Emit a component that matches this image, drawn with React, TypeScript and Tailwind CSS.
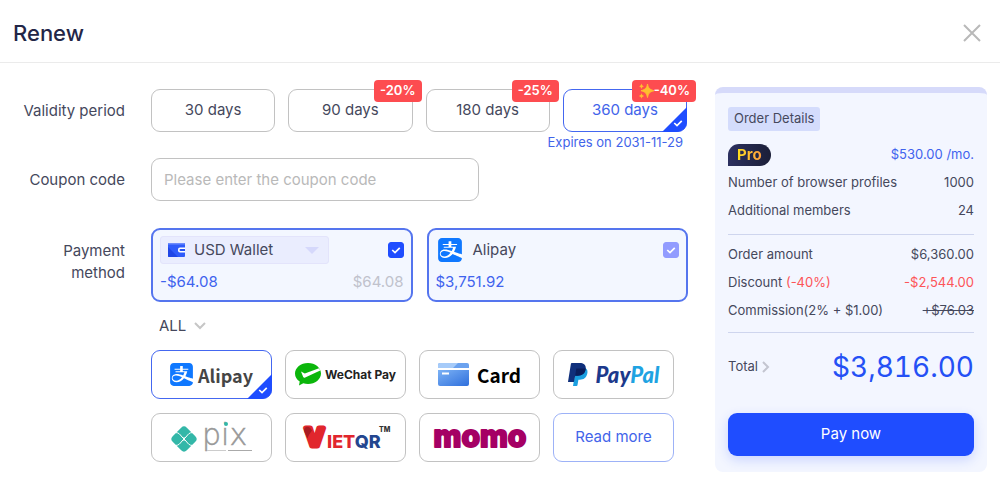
import { useState } from "react";
import type { ReactNode } from "react";
import { SiAlipay } from "react-icons/si";

const PERIODS = [
  { days: 30 },
  { days: 90, off: "-20%" },
  { days: 180, off: "-25%" },
  { days: 360, off: "-40%", hot: true },
];

function Tick({ className = "" }: { className?: string }) {
  return (
    <svg viewBox="0 0 12 12" fill="none" stroke="currentColor" strokeWidth="2" className={className} aria-hidden="true">
      <path d="M1.5 6 4.8 9.2 10.5 3.4" />
    </svg>
  );
}

// Blue triangle with a tick in the corner of a selected option
function Corner() {
  return (
    <span className="absolute -right-px -bottom-px flex size-[25px] items-end justify-end rounded-br-[10px] bg-[#1f4dff] p-1 text-white [clip-path:polygon(100%_0,100%_100%,0_100%)]">
      <Tick className="size-[10px]" />
    </span>
  );
}

function Sparkles() {
  return (
    <svg viewBox="0 0 16 16" fill="#ffbe2e" className="size-4" aria-hidden="true">
      <path d="M9.500 1c.8 4.200 2 5.400 6.500 6.700-4.500 1.300-5.700 2.500-6.500 6.800C8.700 10.200 7.500 9 3 7.700 7.500 6.400 8.700 5.200 9.500 1Z" stroke="#ffbe2e" strokeLinejoin="round" />
      <path d="M3.500.5c.4 1.700 1 2.300 2.500 2.800-1.500.5-2.100 1.100-2.500 2.900C3.100 4.400 2.500 3.800 1 3.300 2.500 2.800 3.100 2.200 3.500.5ZM3.500 10c.4 1.800 1 2.400 2.700 2.900-1.700.5-2.300 1.100-2.700 2.900-.4-1.800-1-2.400-2.700-2.900 1.700-.5 2.300-1.100 2.700-2.900Z" />
    </svg>
  );
}

function AlipayMark({ className }: { className: string }) {
  return (
    <span className={`inline-flex rounded-[4px] bg-white text-[#0f78ff] ${className}`}>
      <SiAlipay className="size-full" />
    </span>
  );
}

function WalletIcon() {
  return (
    <svg viewBox="0 0 17 14" className="h-[14px] w-[17px]" aria-hidden="true">
      <path d="M1 0h15a1 1 0 0 1 1 1v12a1 1 0 0 1-1 1H1a1 1 0 0 1-1-1V1a1 1 0 0 1 1-1Z" fill="#2f5bfa" />
      <path d="M0 4l10 10H1a1 1 0 0 1-1-1Z" fill="#1f45e6" />
      <path d="M0 1a1 1 0 0 1 1-1h15a1 1 0 0 1 1 1v.5H0Z" fill="#6f8cfc" />
      <path d="M17 4.500h-5a2 2 0 0 0-2 2v1a2 2 0 0 0 2 2h5Z" fill="#fff" />
      <path d="M17 6h-4.500a1 1 0 0 0 0 2H17Z" fill="#2450f5" />
    </svg>
  );
}

function WeChatPayMark() {
  return (
    <svg viewBox="0 0 26 23" className="h-[23px] w-[26px]" aria-hidden="true">
      <path d="M13 0C5.800 0 0 4.700 0 10.500c0 3.300 1.800 6.200 4.700 8.100L4 22.500l4.300-2.300c1.500.5 3.100.8 4.700.8 7.200 0 13-4.700 13-10.500S20.200 0 13 0Z" fill="#0bb60b" />
      <path d="M6 8.500c1.400.4 2.600 1.400 3.800 2L24 5.300c.5.700.9 1.400 1.200 2.200L10.200 14.600c-.8.400-1.600.2-2-.5Z" fill="#fff" />
    </svg>
  );
}

function CardMark() {
  return (
    <svg viewBox="0 0 31 23" className="h-[23px] w-[31px]" aria-hidden="true">
      <defs>
        <linearGradient id="card-face" x1="0" y1="0" x2="1" y2="1">
          <stop offset="0" stopColor="#7cb2f5" />
          <stop offset="1" stopColor="#2f6fdc" />
        </linearGradient>
      </defs>
      <path d="M2 0h27a2 2 0 0 1 2 2v3H0V2a2 2 0 0 1 2-2Z" fill="#6ba2ef" />
      <path d="M2 0h18l-5 5H0V2a2 2 0 0 1 2-2Z" fill="#a6cbf9" />
      <path d="M0 7h31v14a2 2 0 0 1-2 2H2a2 2 0 0 1-2-2Z" fill="url(#card-face)" />
      <path d="M4 10.500h7" stroke="#fff" strokeWidth="2" />
    </svg>
  );
}

function PayPalMark() {
  return (
    <svg viewBox="0 0 20 23" className="h-[23px] w-[20px]" aria-hidden="true">
      <path d="M8 5h9.500c2 1.300 2.400 3.500 1.700 6-1 3.900-3.600 5.700-7.400 5.700h-1.400L9.500 22a1 1 0 0 1-1 .9H5Z" fill="#1a9fe0" />
      <path d="M3.800 0h8c4 0 6.500 2 5.900 6-.7 4.600-3.700 6.700-8 6.700H7.200L5.900 19H.6a.5.500 0 0 1-.5-.7L2.900.8A1 1 0 0 1 3.800 0Z" fill="#10307c" />
      <path d="M8.300 5.600h8.900c.4 0 .5.200.4.700-.7 4.400-3.600 6.400-7.900 6.400H7.200Z" fill="#0a1e5c" />
    </svg>
  );
}

const METHODS: { id: string; logo: ReactNode }[] = [
  {
    id: "Alipay",
    logo: (
      <>
        <AlipayMark className="size-[23px]" />
        <span className="ml-px font-['Noto_Sans_CJK_SC',sans-serif] text-[18px] font-bold text-[#454545]">Alipay</span>
      </>
    ),
  },
  {
    id: "WeChat Pay",
    logo: (
      <>
        <WeChatPayMark />
        <span className="text-xs font-bold text-[#222]">WeChat Pay</span>
      </>
    ),
  },
  {
    id: "Card",
    logo: (
      <>
        <CardMark />
        <span className="ml-1 font-['Noto_Sans_CJK_SC',sans-serif] text-[19px] font-bold text-black">Card</span>
      </>
    ),
  },
  {
    id: "PayPal",
    logo: (
      <>
        <PayPalMark />
        <span className="ml-1 font-[Lato,sans-serif] text-[22px] font-black text-[#1c398c] italic">
          Pay<span className="text-[#1fa3e2]">Pal</span>
        </span>
      </>
    ),
  },
  {
    id: "Pix",
    logo: (
      <svg viewBox="0 0 84 44" className="h-11 w-[84px]" aria-hidden="true">
        <rect x="4" y="13" width="20" height="20" rx="4" transform="rotate(45 14 23)" fill="#33b7a8" />
        <path
          d="M5 16.500c4 0 5 2 6.500 3.900 1.600 2.100 3.400 2.100 5 0 1.500-1.900 2.500-3.900 6.500-3.900M5 29.500c4 0 5-2 6.500-3.900 1.600-2.100 3.400-2.100 5 0 1.500 1.900 2.500 3.900 6.500 3.900M11.500 20.400l5 5.200M16.500 20.400l-5 5.200"
          fill="none"
          stroke="#fff"
        />
        <text x="32" y="29" fontFamily="DejaVu Sans, sans-serif" fontSize="30" fontWeight="200" fill="#999" stroke="#999" strokeWidth="0.5">
          pix
        </text>
        <circle cx="56" cy="8" r="2" fill="#33b7a8" />
        <path d="M37 34.500h19" stroke="#ccc" />
        <path d="M58 34.500h24" stroke="#aaa" />
      </svg>
    ),
  },
  {
    id: "VietQR",
    logo: (
      <svg viewBox="0 0 90 36" className="h-9 w-[90px]" fontFamily="Inter, sans-serif" fontWeight="800" aria-hidden="true">
        <text x="4" y="26" fontSize="25" fill="#e1262d" stroke="#e1262d" strokeWidth="5" strokeLinejoin="round">
          V
        </text>
        <path d="M5 7c-2 1-2.500 3-1.500 5l3 6.500c1-3 2.500-5.500 4.500-8C9.500 7.500 7.500 6 5 7Z" fill="#a81c22" />
        <text x="26" y="28" fontSize="18" fill="#e1262d">
          IET<tspan fill="#24468f">QR</tspan>
        </text>
        <text x="78" y="12" fontSize="7" fill="#333">
          TM
        </text>
      </svg>
    ),
  },
  {
    id: "MoMo",
    logo: (
      <svg viewBox="0 0 108 44" className="h-11 w-[108px]" aria-hidden="true">
        <text
          x="54"
          y="31"
          textAnchor="middle"
          fontFamily="Inter, sans-serif"
          fontSize="30"
          fontWeight="800"
          fill="#a50064"
          stroke="#a50064"
          strokeWidth="2"
          strokeLinejoin="round"
        >
          momo
        </text>
      </svg>
    ),
  },
];

function Row({ label, value, className = "" }: { label: ReactNode; value: ReactNode; className?: string }) {
  return (
    <div className="flex h-7 items-center justify-between">
      <dt>{label}</dt>
      <dd className={className}>{value}</dd>
    </div>
  );
}

function CheckBox({ label, muted = false }: { label: string; muted?: boolean }) {
  return (
    <span className="relative flex size-4">
      <input
        type="checkbox"
        aria-label={label}
        defaultChecked
        disabled={muted}
        className="size-4 appearance-none rounded-[3px] border border-[#1f4dff] checked:bg-[#1f4dff] disabled:border-[#929cff] disabled:checked:bg-[#929cff]"
      />
      <Tick className="pointer-events-none absolute inset-[3px] text-white" />
    </span>
  );
}

export default function App() {
  const [days, setDays] = useState(360);
  const [method, setMethod] = useState("Alipay");

  return (
    <div className="min-h-screen bg-white font-[Inter,sans-serif] text-[15px] text-[#45485c]">
      <header className="flex h-[63px] items-center justify-between border-b border-[#ebebeb] px-[13px] pt-1">
        <h1 className="text-[22px] font-medium text-[#232647]">Renew</h1>
        <button type="button" aria-label="Close" className="py-1 pr-[6px]">
          <svg viewBox="0 0 18 18" stroke="#b9b9b9" strokeWidth="2" className="size-[18px]">
            <path d="M1 1l16 16M17 1 1 17" />
          </svg>
        </button>
      </header>

      <main className="flex items-start gap-[27px] pt-6 pr-[13px]">
        <form className="grid flex-1 grid-cols-[125px_minmax(0,1fr)] gap-x-[26px] pt-[2px]">
          <span className="text-right leading-[43px]">Validity period</span>
          <div>
            <div className="mr-px grid grid-cols-4 gap-[13px]">
              {PERIODS.map((p) => (
                <button
                  key={p.days}
                  type="button"
                  aria-pressed={days === p.days}
                  onClick={() => setDays(p.days)}
                  className="relative h-[43px] rounded-[9px] border border-[#c2c2c2] aria-pressed:border-[#4467f0] aria-pressed:text-[#4264ea]"
                >
                  {p.days} days
                  {days === p.days && <Corner />}
                  {p.off && (
                    <span className="absolute -top-[10px] -right-[10px] flex h-[22px] items-center rounded-[4px] bg-[#fd4c50] px-[6px] text-[13px] font-semibold text-white">
                      {p.hot && <Sparkles />}
                      {p.off}
                    </span>
                  )}
                </button>
              ))}
            </div>
            <p className="h-[26px] pr-[5px] text-right text-[13px] leading-5 text-[#4264ea]">Expires on 2031-11-29</p>
          </div>

          <label htmlFor="coupon" className="text-right leading-[43px]">
            Coupon code
          </label>
          <div className="pb-[27px]">
            <input
              id="coupon"
              placeholder="Please enter the coupon code"
              className="h-[43px] w-[328px] rounded-[9px] border border-[#c2c2c2] px-3 placeholder:text-[#b9b9b9]"
            />
          </div>

          <span className="pt-3 pl-10 text-right leading-[22px]">Payment method</span>
          <div>
            <div className="grid grid-cols-2 gap-[14px]">
              <div className="h-[74px] rounded-[9px] border-2 border-[#5575ee] bg-[#f3f7ff] px-[7px] py-[6px]">
                <div className="flex items-center justify-between">
                  <span className="relative flex items-center">
                    <span className="pointer-events-none absolute left-2">
                      <WalletIcon />
                    </span>
                    <select
                      aria-label="Wallet"
                      className="h-7 w-[169px] appearance-none rounded-[3px] border border-[#e3e4fb] bg-[#eaedfe] pl-[33px]"
                    >
                      <option>USD Wallet</option>
                    </select>
                    <svg viewBox="0 0 14 7" fill="#d5d8fb" className="pointer-events-none absolute right-[10px] w-[14px]" aria-hidden="true">
                      <path d="M0 0h14L7 7Z" />
                    </svg>
                  </span>
                  <CheckBox label="Pay with USD Wallet" />
                </div>
                <div className="flex justify-between pt-[7px]">
                  <span className="text-[#3f63ee]">-$64.08</span>
                  <span className="text-[#c0c2cc]">$64.08</span>
                </div>
              </div>
              <div className="h-[74px] rounded-[9px] border-2 border-[#5575ee] bg-[#f3f7ff] px-[7px] py-[6px]">
                <div className="flex h-7 items-center">
                  <AlipayMark className="mr-[11px] ml-[2px] size-6" />
                  <span className="flex-1">Alipay</span>
                  <CheckBox label="Pay with Alipay" muted />
                </div>
                <p className="pt-[7px] text-[#3f63ee]">$3,751.92</p>
              </div>
            </div>

            <div className="relative my-3 flex w-[60px] items-center pl-2">
              <select aria-label="Payment region" className="h-6 w-full appearance-none">
                <option>ALL</option>
              </select>
              <svg viewBox="0 0 12 8" fill="none" stroke="#c6c6c6" strokeWidth="2" className="pointer-events-none absolute right-[5px] w-3" aria-hidden="true">
                <path d="M1 1l5 5 5-5" />
              </svg>
            </div>

            <div className="mr-[14px] grid grid-cols-4 gap-x-[13px] gap-y-[14px]">
              {METHODS.map((m) => (
                <button
                  key={m.id}
                  type="button"
                  aria-label={m.id}
                  aria-pressed={method === m.id}
                  onClick={() => setMethod(m.id)}
                  className="relative flex h-[49px] items-center justify-center gap-1 rounded-[9px] border border-[#c2c2c2] leading-none aria-pressed:border-[#4467f0]"
                >
                  {m.logo}
                  {method === m.id && <Corner />}
                </button>
              ))}
              <button type="button" className="h-[49px] rounded-[9px] border border-[#9db2f7] text-[#4264ea]">
                Read more
              </button>
            </div>
          </div>
        </form>

        <aside className="w-[272px] rounded-lg border-t-[6px] border-[#d6dafa] bg-[#f3f6ff] px-[13px] pt-[14px] pb-4 text-[13px]">
          <h2 className="inline-flex h-6 items-center rounded-[3px] bg-[#d4dcfc] px-[6px]">Order Details</h2>
          <dl className="border-b border-[#ced5ee] pt-[10px] pb-[9px]">
            <Row
              label={
                <span className="flex h-[22px] items-center rounded-full rounded-bl-none bg-linear-to-r from-[#2c3060] to-[#1b1f38] px-[9px]">
                  <b className="bg-linear-to-r from-[#ffe01a] to-[#ff9a3c] bg-clip-text text-[15px] text-transparent">Pro</b>
                </span>
              }
              value="$530.00 /mo."
              className="text-[#3f63ee]"
            />
            <Row label="Number of browser profiles" value="1000" />
            <Row label="Additional members" value="24" />
          </dl>
          <dl className="border-b border-[#ced5ee] pt-[6px] pb-[7px]">
            <Row label="Order amount" value="$6,360.00" />
            <Row label={<>Discount <span className="text-[#fd5458]">(-40%)</span></>} value="-$2,544.00" className="text-[#fd5458]" />
            <Row label="Commission(2% + $1.00)" value={<del>+$76.03</del>} />
          </dl>
          <div className="flex h-[68px] items-center justify-between">
            <button type="button" className="flex items-center gap-1">
              Total
              <svg viewBox="0 0 8 12" fill="none" stroke="#c3c5d0" strokeWidth="2" className="h-3 w-2" aria-hidden="true">
                <path d="M1 1l5 5-5 5" />
              </svg>
            </button>
            <output className="text-[28px] text-[#2450f5] tabular-nums">$3,816.00</output>
          </div>
          <button type="button" className="mt-3 h-[43px] w-full rounded-[9px] bg-[#1f4dff] text-[15px] text-white shadow-[0_4px_12px_#1f4dff30]">
            Pay now
          </button>
        </aside>
      </main>
    </div>
  );
}
